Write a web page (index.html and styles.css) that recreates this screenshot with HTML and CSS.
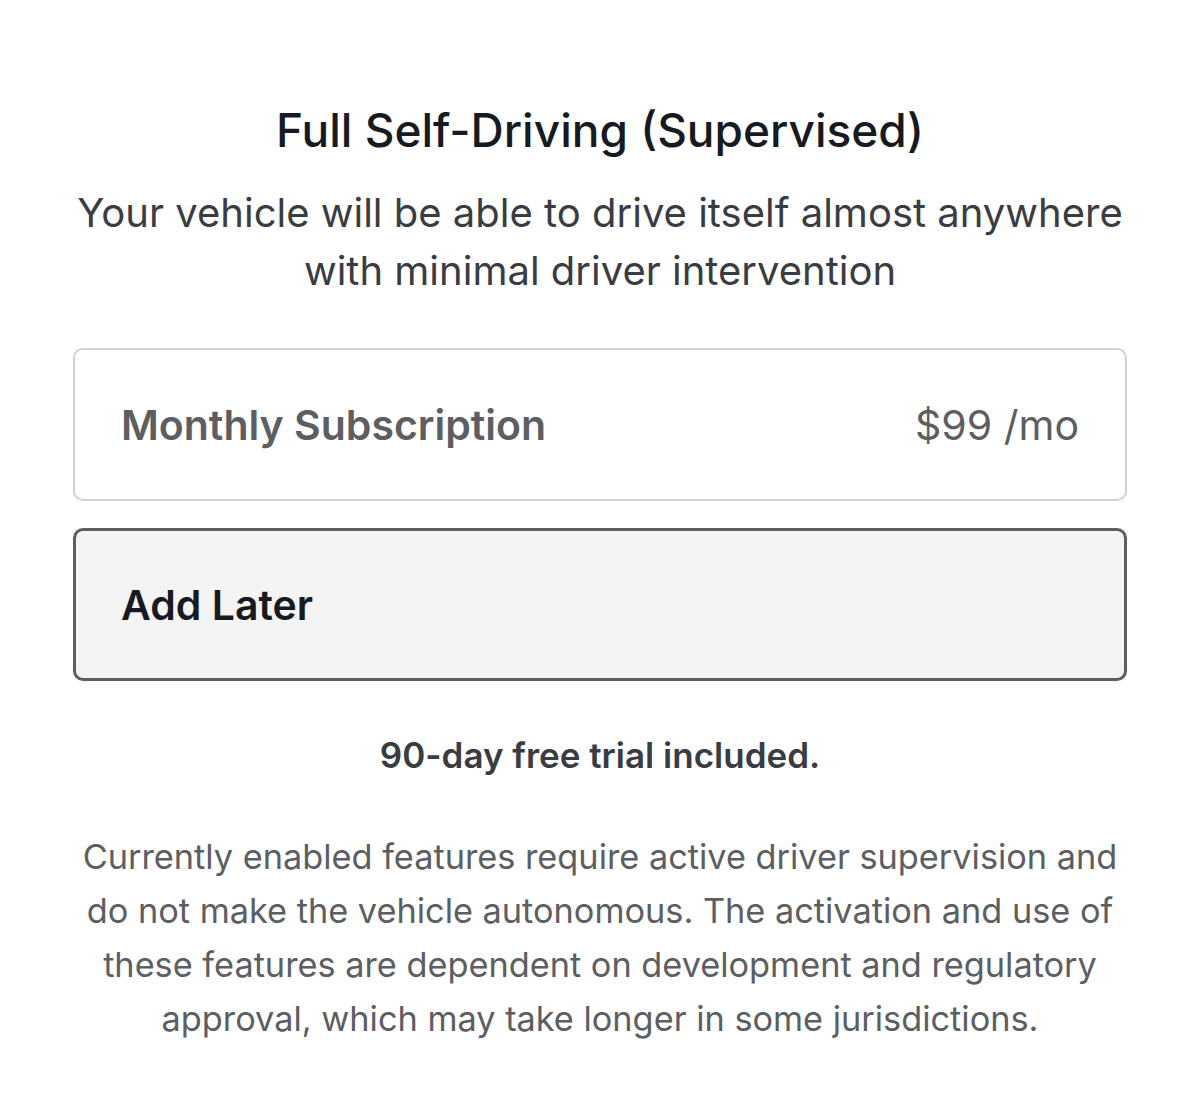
FILE: index.html
```html
<!DOCTYPE html>
<html lang="en">
<head>
  <meta charset="UTF-8" />
  <meta name="viewport" content="width=device-width, initial-scale=1.0"/>
  <title>Full Self-Driving (Supervised)</title>
  <link rel="stylesheet" href="styles.css">
</head>
<body>
  <div class="fsd">
    <h2 class="fsd-title">Full Self-Driving (Supervised)</h2>
    <p class="fsd-desc">Your vehicle will be able to drive itself almost anywhere<br>with minimal driver intervention</p>

    <div class="options">
      <div class="option">
        <span class="option-name">Monthly Subscription</span>
        <span class="option-price">$99 /mo</span>
      </div>
      <div class="option selected">
        <span class="option-name">Add Later</span>
      </div>
    </div>

    <p class="trial">90-day free trial included.</p>

    <p class="disclaimer">Currently enabled features require active driver supervision and do not make the vehicle autonomous. The activation and use of these features are dependent on development and regulatory approval, which may take longer in some jurisdictions.</p>
  </div>
</body>
</html>
```

FILE: styles.css
```css
body {
  font-family: Inter, "Noto Sans", sans-serif;
  margin: 0; padding: 0;
  background: #fff;
  color: #171a20;
}
.fsd {
  padding: 0 73px;
  text-align: center;
}
.fsd-title {
  margin: 0; padding-top: 104px;
  font-size: 46px; font-weight: 500;
  line-height: 52px;
  color: #171a20;
}
.fsd-desc {
  margin: 28px 0 0;
  font-size: 40px; line-height: 58px;
  color: #393c41;
}
.options {
  display: flex; flex-direction: column;
  gap: 27px;
  margin-top: 48px;
}
.option {
  display: flex;
  justify-content: space-between;
  align-items: center;
  height: 153px;
  box-sizing: border-box;
  padding: 0 46px;
  border: 2px solid #d0d1d2;
  border-radius: 10px;
  font-size: 41px;
  color: #5c5e62;
}
.option-name {
  font-weight: 600;
}
.option.selected {
  background: #f4f4f4;
  border: 3px solid #5c5e62;
  padding: 0 45px;
  color: #171a20;
}
.trial {
  margin: 54px 0 0;
  font-size: 35px; font-weight: 600;
  line-height: 40px;
  color: #393c41;
}
.disclaimer {
  margin: 55px 0 0;
  font-size: 34.3px; line-height: 54px;
  color: #5c5e62;
}
```
